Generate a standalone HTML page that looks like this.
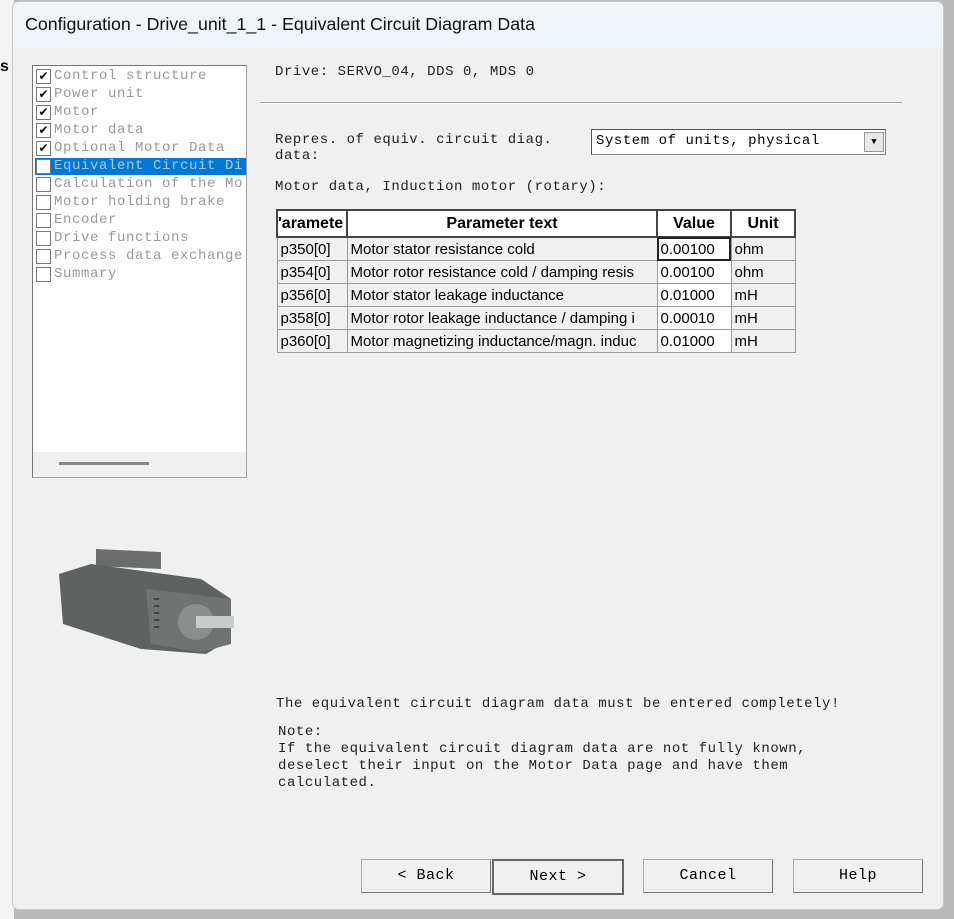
<!DOCTYPE html><html><head><style>
body{margin:0;width:954px;height:919px;background:#b9b9b9;position:relative;overflow:hidden;font-family:"Liberation Mono",monospace}
.bgl{position:absolute;left:0;top:0;width:14px;height:919px;background:#f3f3f3}
.dlg{position:absolute;left:12px;top:1px;width:930px;height:907px;background:#f0f0f0;border:1px solid #c8c8c8;border-radius:7px;overflow:hidden}
.tb{height:46px;background:#eef4f8;font-family:"Liberation Sans",sans-serif;font-size:17.8px;line-height:44px;padding-left:12px;color:#111}
.a{position:absolute;white-space:pre}
.tree{position:absolute;left:19px;top:63px;width:213px;height:411px;background:#fff;border:1px solid #a0a0a0;border-top-color:#777;border-left-color:#777;overflow:hidden}
.row{position:absolute;left:2px;height:17px;width:211px;font-size:14px;color:#999;line-height:17px;letter-spacing:0.6px;white-space:pre;overflow:hidden}
.cb{position:absolute;left:1px;top:1px;width:13px;height:13px;border:1px solid #777;background:#fff;font-size:12px;line-height:13px;text-align:center;color:#000;font-family:"DejaVu Sans",sans-serif;letter-spacing:0}
.row span{position:absolute;left:19px}
.sel{background:#0078d7;color:#b0c8e8}
table{position:absolute;left:263px;top:207px;border-collapse:collapse;font-family:"Liberation Sans",sans-serif;font-size:15px}
td,th{border:1px solid #999;height:22px;padding:0 3px;white-space:nowrap;overflow:hidden;background:#f0f0f0}
th{height:25px;border:2px solid #444;font-size:16px;background:#fff}
td.v{background:#fff}
.btn{position:absolute;top:857px;width:128px;height:32px;border:1px solid #aaa;border-bottom-color:#777;border-right-color:#777;background:#f0f0f0;font-size:15px;text-align:center;line-height:32px;letter-spacing:0.5px}
.m{font-size:14px;color:#222;letter-spacing:0.55px}
</style></head><body>
<div class="bgl"></div>
<div class="a" style="left:0;top:58px;font:bold 16px 'Liberation Sans'">s</div>
<div class="dlg">
<div class="tb">Configuration - Drive_unit_1_1 - Equivalent Circuit Diagram Data</div>
<div class="tree">
<div class="row" style="top:2px"><div class="cb">✔</div><span>Control structure</span></div>
<div class="row" style="top:20px"><div class="cb">✔</div><span>Power unit</span></div>
<div class="row" style="top:38px"><div class="cb">✔</div><span>Motor</span></div>
<div class="row" style="top:56px"><div class="cb">✔</div><span>Motor data</span></div>
<div class="row" style="top:74px"><div class="cb">✔</div><span>Optional Motor Data</span></div>
<div class="row sel" style="top:92px"><div class="cb"></div><span>Equivalent Circuit Di</span></div>
<div class="row" style="top:110px"><div class="cb"></div><span>Calculation of the Mo</span></div>
<div class="row" style="top:128px"><div class="cb"></div><span>Motor holding brake</span></div>
<div class="row" style="top:146px"><div class="cb"></div><span>Encoder</span></div>
<div class="row" style="top:164px"><div class="cb"></div><span>Drive functions</span></div>
<div class="row" style="top:182px"><div class="cb"></div><span>Process data exchange</span></div>
<div class="row" style="top:200px"><div class="cb"></div><span>Summary</span></div>
<div style="position:absolute;left:0;top:386px;width:213px;height:25px;background:#f0f0f0"></div>
<div style="position:absolute;left:26px;top:396px;width:90px;height:3px;background:#888"></div>
</div>
<svg class="a" style="left:38px;top:542px" width="185" height="110" viewBox="0 0 185 110">
<polygon points="45,5 110,8 110,25 45,22" fill="#6a6d6c"/>
<polygon points="8,30 40,20 150,35 180,55 180,95 155,110 90,105 12,80" fill="#5e6261"/>
<polygon points="95,45 180,55 180,100 150,108 100,100" fill="#6f7372"/>
<circle cx="145" cy="78" r="18" fill="#8a8e8d"/>
<rect x="145" y="72" width="38" height="12" fill="#c8cccc"/>
<g stroke="#333" stroke-width="1.5"><line x1="103" y1="55" x2="108" y2="55"/><line x1="103" y1="62" x2="108" y2="62"/><line x1="103" y1="69" x2="108" y2="69"/><line x1="103" y1="76" x2="108" y2="76"/><line x1="103" y1="83" x2="108" y2="83"/></g>
</svg>
<div class="a m" style="left:262px;top:62px">Drive: SERVO_04, DDS 0, MDS 0</div>
<div style="position:absolute;left:247px;top:100px;width:642px;height:1px;background:#a0a0a0;border-bottom:1px solid #fff"></div>
<div class="a m" style="left:262px;top:130px;line-height:16px">Repres. of equiv. circuit diag.
data:</div>
<div style="position:absolute;left:578px;top:127px;width:293px;height:24px;background:#fff;border:1px solid #888;border-top-color:#555;border-left-color:#555">
<div class="a m" style="left:4px;top:3px;color:#000">System of units, physical</div>
<div style="position:absolute;right:1px;top:2px;width:18px;height:18px;background:#e8e8e8;border:1px solid #999;font-size:9px;text-align:center;line-height:18px">▼</div></div>
<div class="a m" style="left:262px;top:177px">Motor data, Induction motor (rotary):</div>
<table>
<tr><th style="width:68px;text-align:left;padding:0">'aramete</th><th style="width:302px">Parameter text</th><th style="width:66px">Value</th><th style="width:56px">Unit</th></tr>
<tr><td>p350[0]</td><td>Motor stator resistance cold</td><td class="v" style="outline:2px solid #222;outline-offset:-2px">0.00100</td><td>ohm</td></tr>
<tr><td>p354[0]</td><td>Motor rotor resistance cold / damping resis</td><td class="v">0.00100</td><td>ohm</td></tr>
<tr><td>p356[0]</td><td>Motor stator leakage inductance</td><td class="v">0.01000</td><td>mH</td></tr>
<tr><td>p358[0]</td><td>Motor rotor leakage inductance / damping i</td><td class="v">0.00010</td><td>mH</td></tr>
<tr><td>p360[0]</td><td>Motor magnetizing inductance/magn. induc</td><td class="v">0.01000</td><td>mH</td></tr>
</table>
<div class="a m" style="left:263px;top:694px">The equivalent circuit diagram data must be entered completely!</div>
<div class="a m" style="left:265px;top:722px;line-height:17px">Note:
If the equivalent circuit diagram data are not fully known,
deselect their input on the Motor Data page and have them
calculated.</div>
<div class="btn" style="left:348px;top:857px">&lt; Back</div>
<div class="btn" style="left:479px;top:857px;border:2px solid #666">Next &gt;</div>
<div class="btn" style="left:630px;top:857px">Cancel</div>
<div class="btn" style="left:780px;top:857px">Help</div>
</div>
</body></html>
